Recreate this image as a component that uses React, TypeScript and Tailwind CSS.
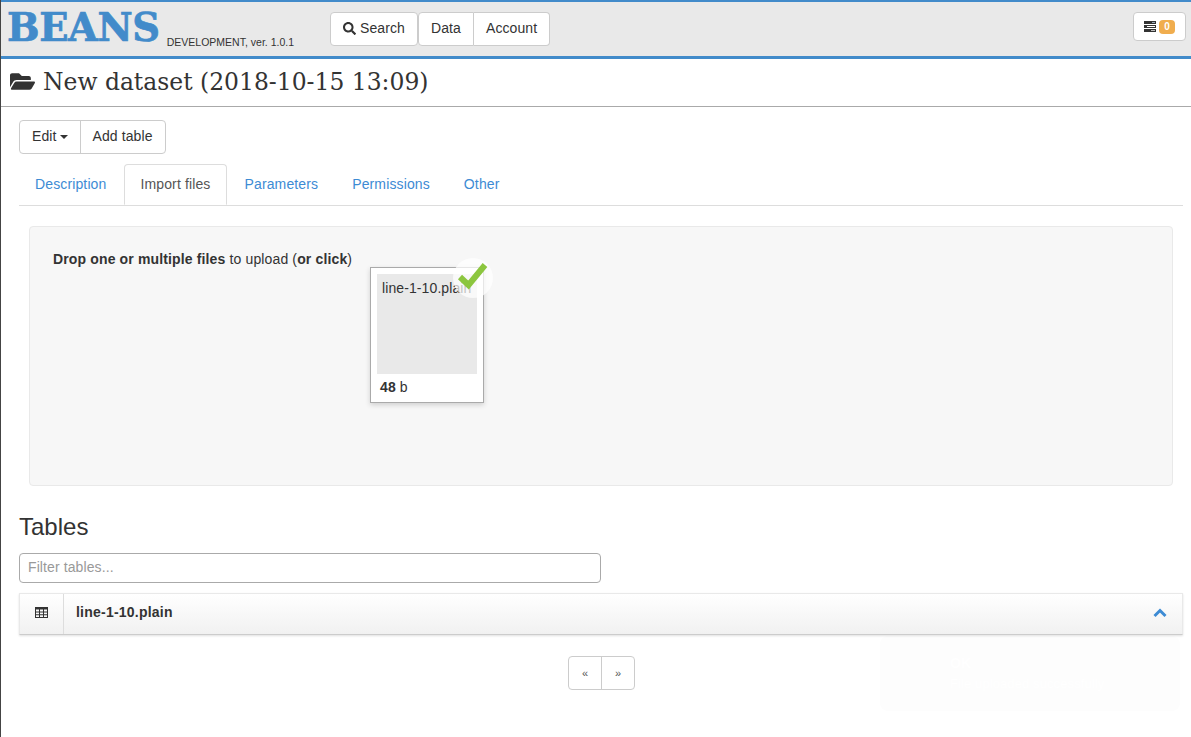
import { FaFolderOpen, FaSearch } from "react-icons/fa";

const sans = "font-['Liberation_Sans',Arial,sans-serif]";

function TableIcon() {
  return (
    <svg width="13" height="11" viewBox="0 0 13 11" className="text-[#333]">
      <rect x="0.5" y="0.5" width="12" height="10" fill="none" stroke="currentColor" />
      <rect x="0" y="0" width="13" height="2.5" fill="currentColor" />
      <path d="M0 5h13M0 7.75h13M4.5 2v9M8.5 2v9" stroke="currentColor" strokeWidth="1" />
    </svg>
  );
}

function StackIcon() {
  return (
    <svg width="12" height="11" viewBox="0 0 12 11">
      <rect x="0" y="0" width="12" height="3" fill="#333" />
      <rect x="0" y="4" width="12" height="3" fill="#333" />
      <rect x="0" y="8" width="12" height="3" fill="#333" />
      <rect x="8" y="1" width="3" height="1" fill="#9ab" />
      <rect x="3" y="5" width="8" height="1" fill="#fff" />
      <rect x="7" y="9" width="4" height="1" fill="#bbb" />
    </svg>
  );
}

function Tab({ label, active }: { label: string; active?: boolean }) {
  if (active) {
    return (
      <div className="h-[41px] -mb-px px-[15px] flex items-center border border-[#ddd] border-b-white bg-white rounded-t text-[#555] mr-[2px] tracking-[0.13px]">
        {label}
      </div>
    );
  }
  return <div className="h-[41px] px-[16px] flex items-center text-[#3d8bd4] mr-[2px] tracking-[0.13px]">{label}</div>;
}

export default function App() {
  return (
    <div className={`${sans} relative min-h-[737px] border-l border-[#444] bg-white text-[14px] tracking-[0.1px] text-[#333] overflow-hidden`}>
      <header className="h-[59px] border-t-2 border-b-[3px] border-[#428bca] bg-[#e9e9e9] flex items-start">
        <div className="w-[329px] shrink-0 flex items-end pl-[6px] pt-[3px]">
          <span className="font-['DejaVu_Serif',serif] font-bold text-[38.5px] leading-[46px] text-[#428bca] tracking-[-0.4px] [-webkit-text-stroke:0.7px_#428bca]">BEANS</span>
          <span className="ml-[7px] mb-[2px] text-[10.5px] tracking-normal leading-[14px] text-[#333]">DEVELOPMENT, ver. 1.0.1</span>
        </div>
        <nav className="flex mt-[10px] h-[34px]">
          <div className="flex items-center gap-[4px] px-[12px] pb-[2px] bg-white border border-[#ccc] rounded">
            <FaSearch className="text-[13px]" />
            <span>Search</span>
          </div>
          <div className="flex items-center px-[12px] pb-[2px] bg-white border border-[#ccc] rounded-l">Data</div>
          <div className="flex items-center px-[12px] pb-[2px] bg-white border border-l-0 border-[#ccc] rounded-r-sm">Account</div>
        </nav>
        <div className="ml-auto mr-[5px] mt-[10px] w-[53px] h-[29px] flex items-center justify-center gap-[3px] bg-white border border-[#ccc] rounded">
          <StackIcon />
          <span className="w-[16px] h-[14px] bg-[#f0ad4e] rounded-sm text-white text-[10px] font-bold flex items-center justify-center">0</span>
        </div>
      </header>

      <div className="h-[48px] border-b border-[#aaa] flex items-center pl-[9px] gap-[8px] pb-[2px]">
        <FaFolderOpen className="text-[25px] text-[#333]" />
        <h1 className="font-['DejaVu_Serif',serif] text-[23.45px] tracking-normal leading-[30px] text-[#333]">New dataset (2018-10-15 13:09)</h1>
      </div>

      <main className="pl-[18px] pr-[8px]">
        <div className="mt-[13px] flex h-[34px] w-fit border border-[#ccc] rounded">
          <div className="flex items-center gap-[3px] px-[12px] pb-[2px] border-r border-[#ccc]">
            Edit
            <span className="mt-[1px] border-x-[4px] border-x-transparent border-t-[4px] border-t-[#333]" />
          </div>
          <div className="flex items-center px-[12px] pb-[2px]">Add table</div>
        </div>

        <div className="mt-[10px] flex border-b border-[#ddd]">
          <Tab label="Description" />
          <Tab label="Import files" active />
          <Tab label="Parameters" />
          <Tab label="Permissions" />
          <Tab label="Other" />
        </div>

        <section className="mx-[10px] mt-[20px] h-[260px] bg-[#f7f7f7] border border-[#e9e9e9] rounded flex items-start pl-[23px] pt-[22px]">
          <p className="w-[317px] shrink-0 leading-[20px] tracking-[0.14px]">
            <b>Drop one or multiple files</b> to upload (<b>or click</b>)
          </p>
          <div className="relative mt-[18px] w-[114px] h-[136px] bg-white border border-[#aaa] shadow-[0_2px_5px_rgba(0,0,0,0.16)] px-[6px] pt-[6px]">
            <div className="h-[100px] bg-[#e9e9e9] px-[5px] pt-[4px] leading-[20px] whitespace-nowrap overflow-hidden">line-1-10.plain</div>
            <div className="pl-[3px] pt-[3px] leading-[20px]"><b>48</b> b</div>
            <div className="absolute -top-[10px] left-[82px] w-[40px] h-[40px] rounded-full bg-white/70 flex items-center justify-center">
              <svg width="40" height="40" viewBox="0 0 40 40">
                <path d="M7 19L15.5 27L32 7" fill="none" stroke="#8cc63f" strokeWidth="6" strokeLinecap="butt" strokeLinejoin="miter" />
              </svg>
            </div>
          </div>
        </section>

        <h2 className="mt-[24px] text-[24px] tracking-normal leading-[33px] text-[#333]">Tables</h2>
        <input
          placeholder="Filter tables..."
          className="mt-[10px] block w-[582px] h-[30px] px-[8px] pb-[3px] border border-[#aaa] rounded bg-white placeholder:text-[#999] outline-none"
        />

        <div className="relative z-10 mt-[10px] h-[42px] flex items-stretch border border-[#e9e9e9] border-b-[#ccc] bg-gradient-to-b from-white to-[#f1f1f1] shadow-[0_1px_2px_rgba(0,0,0,0.12)]">
          <div className="w-[44px] pb-[4px] flex items-center justify-center border-r border-[#ddd]"><TableIcon /></div>
          <div className="flex-1 flex items-center pl-[12px] pb-[4px] font-bold tracking-[0.22px]">line-1-10.plain</div>
          <div className="w-[44px] pb-[3px] flex items-center justify-center">
            <svg width="14" height="10" viewBox="0 0 14 10">
              <path d="M1.5 8L7 2.5L12.5 8" fill="none" stroke="#3d8bd4" strokeWidth="3" />
            </svg>
          </div>
        </div>

        <div className="mt-[21px] ml-[549px] flex w-[67px] h-[34px] border border-[#ccc] rounded text-[11px] text-[#555]">
          <div className="flex-1 flex items-center justify-center border-r border-[#ccc]">«</div>
          <div className="flex-1 flex items-center justify-center">»</div>
        </div>
      </main>

      <div className="absolute left-[879px] top-[636px] w-[300px] h-[75px] rounded-lg bg-[#fdfdfd] text-white flex flex-col justify-center pl-[70px]">
        <div className="font-bold">OK</div>
        <div className="text-[13px]">File uploaded successfully</div>
      </div>
    </div>
  );
}
